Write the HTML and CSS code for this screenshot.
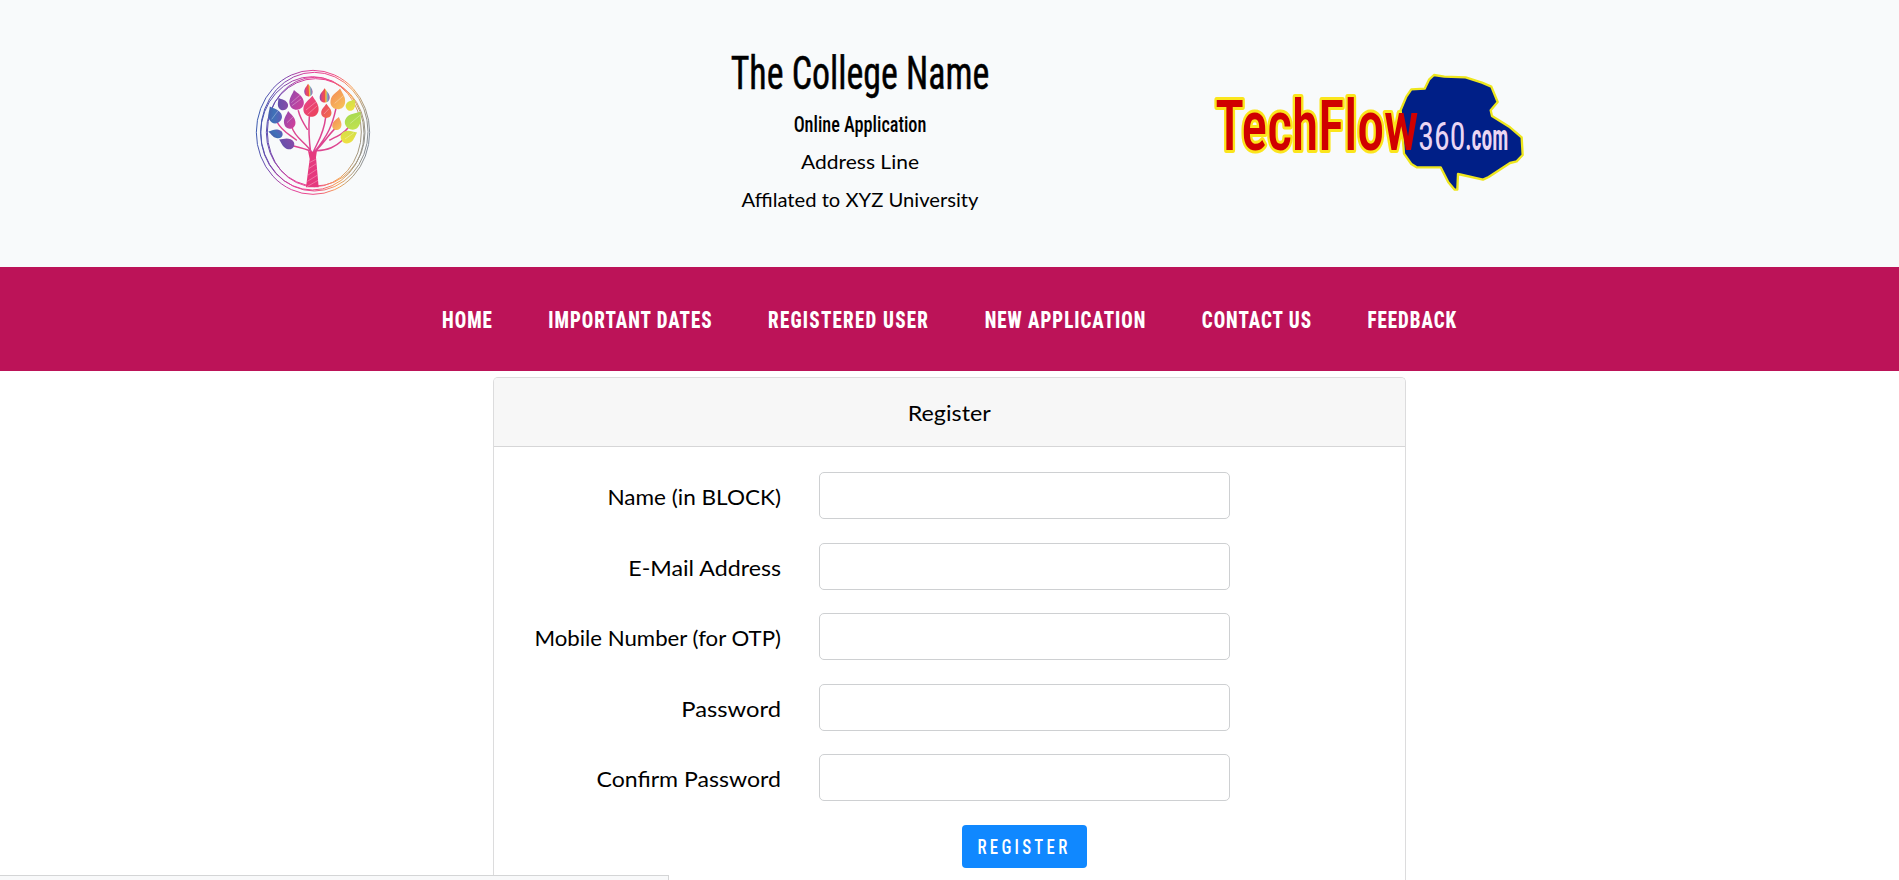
FILE: index.html
```html
<!DOCTYPE html>
<html lang="en">
<head>
<meta charset="utf-8">
<title>The College Name</title>
<link rel="stylesheet" href="styles.css">
</head>
<body>
<header class="site-header">
  <svg class="tree-logo" viewBox="0 0 405 435" aria-label="College logo">
    <defs>
      <linearGradient id="ring" gradientUnits="userSpaceOnUse" x1="35" y1="190" x2="375" y2="240">
        <stop offset="0" stop-color="#3a5bb0"/><stop offset=".18" stop-color="#7a45ad"/>
        <stop offset=".38" stop-color="#e0409c"/><stop offset=".6" stop-color="#ee4a85"/>
        <stop offset=".78" stop-color="#f7a254"/><stop offset=".9" stop-color="#a99a7c"/><stop offset="1" stop-color="#7d8a9c"/>
      </linearGradient>
      <linearGradient id="rainbow"><stop offset="0" stop-color="#8a4bb0"/><stop offset=".25" stop-color="#e8466e"/><stop offset=".5" stop-color="#ea5050"/><stop offset=".62" stop-color="#f5c53d"/><stop offset=".8" stop-color="#6fa5d0"/><stop offset="1" stop-color="#b04b90"/></linearGradient>
      <linearGradient id="blue" x2="1" y2="1"><stop offset="0" stop-color="#4a50a4"/><stop offset=".5" stop-color="#3f72b8"/><stop offset="1" stop-color="#6a55b8"/></linearGradient>
      <linearGradient id="violet" x2="1" y2="1"><stop offset="0" stop-color="#5c51ac"/><stop offset="1" stop-color="#8a4ba8"/></linearGradient>
      <linearGradient id="magenta" x2="1" y2="1"><stop offset="0" stop-color="#8c4bb0"/><stop offset="1" stop-color="#d83f98"/></linearGradient>
      <linearGradient id="red" x2="1" y2="1"><stop offset="0" stop-color="#e8468f"/><stop offset="1" stop-color="#ec4256"/></linearGradient>
      <linearGradient id="scarlet" x2="1" y2="1"><stop offset="0" stop-color="#e8466a"/><stop offset="1" stop-color="#f27048"/></linearGradient>
      <linearGradient id="orange" x2="1" y2="1"><stop offset="0" stop-color="#f38a58"/><stop offset="1" stop-color="#f8c45a"/></linearGradient>
      <linearGradient id="lime" x2="1" y2="1"><stop offset="0" stop-color="#9fd850"/><stop offset="1" stop-color="#c5e34f"/></linearGradient>
      <linearGradient id="lemon" x2="1" y2="1"><stop offset="0" stop-color="#c8e04c"/><stop offset="1" stop-color="#f4e040"/></linearGradient>
      <path id="leaf" d="M0-30C9-17 22-8 22 9C22 24 11 31 0 31C-12 31-22 23-22 9C-22-8-8-17 0-30Z"/>
    </defs>
    <g class="rings">
      <ellipse cx="204" cy="217" rx="170" ry="186"/>
      <ellipse cx="208" cy="215" rx="161" ry="178"/>
      <ellipse cx="202" cy="220" rx="155" ry="170"/>
      <ellipse cx="212" cy="217" rx="148" ry="161"/>
      <ellipse cx="208" cy="216" rx="141" ry="164"/>
    </g>
    <g class="branches">
      <path d="M197 278C192 240 190 210 193 170M187 208C172 185 164 170 160 152M204 278C215 250 236 225 242 172M208 276C250 225 262 195 273 145M210 274C232 255 250 225 270 206M96 186C112 215 132 222 154 240M140 200C150 235 180 245 200 276M146 258C170 264 185 268 200 274M214 272C250 270 270 262 296 237M254 240C280 228 295 222 312 200"/>
    </g>
    <path class="trunk" d="M189 272Q204 280 216 271L213 292L221 382H183L194 297Z"/>
    <path class="hatch" d="M193 308L212 298M191 326L214 311M188 346L215 328M187 364L218 345M186 380L219 361"/>
    <g>
      <use href="#leaf" fill="url(#blue)" transform="translate(87 163) rotate(-28) scale(.9)"/>
      <use href="#leaf" fill="url(#blue)" transform="translate(91 220) rotate(-75) scale(.58 .72)"/>
      <use href="#leaf" fill="url(#violet)" transform="translate(111 131) rotate(-32) scale(.67)"/>
      <use href="#leaf" fill="url(#violet)" transform="translate(124 249) rotate(-65) scale(.7 .8)"/>
      <use href="#leaf" fill="url(#magenta)" transform="translate(153 119) rotate(-12) scale(.98)"/>
      <use href="#leaf" fill="url(#magenta)" transform="translate(133 179) rotate(-8) scale(.78 .88)"/>
      <use href="#leaf" fill="url(#rainbow)" transform="translate(190 90) rotate(-3) scale(.57 .62)"/>
      <use href="#leaf" fill="url(#rainbow)" transform="translate(239 106) scale(.68 .7)"/>
      <use href="#leaf" fill="url(#red)" transform="translate(199 138) rotate(6) scale(1.04)"/>
      <use href="#leaf" fill="url(#scarlet)" transform="translate(244 152) scale(.7)"/>
      <use href="#leaf" fill="url(#orange)" transform="translate(280 116) rotate(10) scale(1 1.02)"/>
      <use href="#leaf" fill="url(#orange)" transform="translate(277 190) rotate(14) scale(.62 .66)"/>
      <use href="#leaf" fill="url(#lemon)" transform="translate(319 134) rotate(35) scale(.62)"/>
      <use href="#leaf" fill="url(#lime)" transform="translate(328 179) rotate(38) scale(1.02)"/>
      <use href="#leaf" fill="url(#lemon)" transform="translate(313 228) rotate(65) scale(.85)"/>
    </g>
    <path class="shine" d="M80 178L101 150M139 128L164 106M141 137L168 117M183 150L215 124M188 163L217 137M126 188L145 170M269 130L298 105M316 190L345 166M300 237L327 218M237 162L252 146"/>
  </svg>

  <div class="heading">
    <h1 class="college">The College Name</h1>
    <h2 class="subtitle">Online Application</h2>
    <p class="address">Address Line</p>
    <p class="affiliation">Affilated to XYZ University</p>
  </div>

  <svg class="tech-logo" viewBox="0 0 1020 435" aria-label="TechFlow360.com">
    <use href="#word" class="halo"/>
    <path class="blob" d="M702 45L733 50L797 52L846 68L874 80L893 126L872 151L876 168L930 202L965 232L968 285L950 304L930 309L866 351L849 359L774 342L772 389L764 389L745 367L722 322H650L634 312L612 281L602 150L619 110L634 88L674 86L687 59Z"/>
    <text id="word" class="word" x="46" y="271" textLength="610" lengthAdjust="spacingAndGlyphs">TechFlow</text>
    <text class="num" x="655" y="270" textLength="141" lengthAdjust="spacingAndGlyphs">360</text>
    <text class="com" x="796" y="270" textLength="129" lengthAdjust="spacingAndGlyphs">.com</text>
  </svg>
</header>

<nav class="navbar">
  <ul class="menu">
    <li>HOME</li><li>IMPORTANT DATES</li><li class="wide">REGISTERED USER</li><li>NEW APPLICATION</li><li>CONTACT US</li><li>FEEDBACK</li>
  </ul>
</nav>

<main class="card">
  <div class="card-header"><span class="title">Register</span></div>
  <form class="card-body">
    <label class="name" for="name">Name (in BLOCK)</label><input id="name" type="text">
    <label class="email" for="email">E-Mail Address</label><input id="email" type="email">
    <label class="mobile" for="mobile">Mobile Number (for OTP)</label><input id="mobile" type="text">
    <label class="pass" for="pass">Password</label><input id="pass" type="password">
    <label class="confirm" for="confirm">Confirm Password</label><input id="confirm" type="password">
    <button type="button" class="btn"><span>REGISTER</span></button>
  </form>
</main>
<div class="status-bar"></div>
</body>
</html>
```
FILE: styles.css
```css
* { box-sizing: border-box; }
body {
  display: flex;
  flex-direction: column;
  height: 100vh;
  margin: 0;
  overflow: hidden;
  background: #fff;
  color: #000;
  font-family: Lato, "Open Sans", sans-serif;
  font-size: 22px;
}
h1, h2, p, ul { margin: 0; padding: 0; }

.site-header {
  display: flex;
  flex: none;
  align-items: flex-start;
  height: 267px;
  padding-left: 245px;
  background: #f8fafb;
}
.tree-logo { width: 135px; height: 145px; margin-top: 60px; }
.tech-logo { width: 340px; height: 145px; margin-top: 60px; }
.rings { fill: none; stroke: url(#ring); stroke-width: 3; }
.branches { fill: none; stroke: #dd4590; stroke-width: 4.5; stroke-linecap: round; }
.trunk { fill: #e5397e; }
.hatch { stroke: #f38fb5; stroke-width: 2; }
.shine { stroke: #fff; stroke-opacity: .3; stroke-width: 3; }

.heading {
  width: 360px;
  margin: 45px 160px 0 300px;
  text-align: center;
  white-space: nowrap;
}
.college, .subtitle { font-family: "Roboto Condensed", Roboto, sans-serif; }
.college {
  font-size: 46px;
  font-weight: 400;
  line-height: 56px;
  transform: scaleX(.78);
  -webkit-text-stroke: .5px #000;
}
.subtitle { margin-top: 9px; font-size: 22.5px; font-weight: 500; line-height: 28px; transform: scaleX(.81); }
.address, .affiliation { font-size: 20px; line-height: 28px; }
.address { margin-top: 9px; transform: scaleX(1.05); }
.affiliation { margin-top: 10px; transform: scaleX(1.01); }

.word { font: 500 211px "Roboto Condensed", Roboto, sans-serif; fill: #d00000; }
.halo { stroke: #fbe51c; stroke-width: 18; stroke-linejoin: round; }
.blob { fill: #001f87; stroke: #eee61e; stroke-width: 7; stroke-linejoin: round; }
.num { font: 400 115px "Roboto Condensed", Roboto, sans-serif; fill: #ead6f3; }
.com { font: 600 108px "Roboto Condensed", Roboto, sans-serif; fill: #ead6f3; }

.navbar {
  display: flex;
  flex: none;
  justify-content: center;
  align-items: center;
  height: 104px;
  background: #bc1358;
}
.menu {
  display: flex;
  gap: 68.5px;
  padding-top: 1px;
  list-style: none;
  white-space: nowrap;
  color: #fff;
  font: 800 23.5px/28px "Roboto Condensed", Roboto, sans-serif;
  letter-spacing: 1.2px;
  transform: scaleX(.81);
}
.wide { letter-spacing: 1.5px; }

.card {
  flex: 1;
  min-height: 0;
  width: 913px;
  margin: 6px 0 0 493px;
  border: 1px solid #dcdcdd;
  border-bottom: 0;
  border-radius: 5px 5px 0 0;
}
.card-header {
  height: 69px;
  border-bottom: 1px solid #d6d6d7;
  border-radius: 4px 4px 0 0;
  background: #f7f7f7;
  line-height: 69px;
  text-align: center;
}
.title { display: inline-block; transform: scaleX(1.06); }
.card-body {
  display: grid;
  grid-template-columns: 287px 411px;
  grid-auto-rows: 47px;
  column-gap: 38px;
  row-gap: 23.6px;
  height: 433px;
  padding-top: 25px;
}
label {
  padding-top: 2px;
  line-height: 46px;
  text-align: right;
  white-space: nowrap;
  transform-origin: right center;
}
.name { transform: scaleX(1.025); }
.email { transform: scaleX(1.055); }
.mobile { transform: scaleX(1.01); }
.pass { transform: scaleX(1.08); }
.confirm { transform: scaleX(1.05); }
input {
  width: 411px;
  height: 47px;
  border: 1px solid #ced0d2;
  border-radius: 5px;
  background: #fff;
  outline: none;
}
.btn {
  grid-column: 2;
  justify-self: center;
  width: 125px;
  height: 43px;
  padding: 2px 0 0;
  border: 0;
  border-radius: 4px;
  background: #1088ff;
  color: #fff;
}
.btn span {
  display: block;
  margin: 0 -8px 0 -9px;
  font: 500 21px/28px "Roboto Condensed", Roboto, sans-serif;
  letter-spacing: 4.1px;
  white-space: nowrap;
  transform: scaleX(.8);
}
.status-bar {
  position: fixed;
  left: 0;
  bottom: 0;
  width: 669px;
  height: 5px;
  border-top: 1px solid #d4d5d6;
  border-right: 1px solid #d4d5d6;
  background: #f8f9fa;
}
```
